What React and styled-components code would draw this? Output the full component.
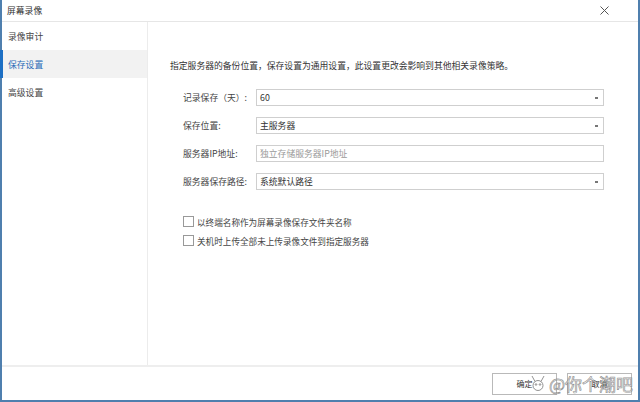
import React from "react";
import styled, { createGlobalStyle } from "styled-components";

const Global = createGlobalStyle`
  html, body { margin: 0; padding: 0; background: #fff; }
  body { font-family: "Noto Sans CJK SC", "Noto Sans", sans-serif; font-size: 8.8px; color: #333; }
  * { box-sizing: border-box; }
`;

const Window = styled.div`
  position: relative;
  width: 640px;
  height: 402px;
  display: flex;
  flex-direction: column;
  background: #fff;
  border-left: 2px solid #4f7fae;
  border-right: 2px solid #4f7fae;
  border-bottom: 2px solid #4f7fae;
`;

const TitleBar = styled.div`
  height: 22px;
  flex: none;
  display: flex;
  align-items: center;
  justify-content: space-between;
  padding: 0 29px 0 5px;
  border-bottom: 1px solid #e6e6e6;
  font-size: 8.8px;
  color: #333;
`;

const Body = styled.div`
  flex: 1;
  display: flex;
  min-height: 0;
`;

const Sidebar = styled.div`
  width: 146px;
  flex: none;
  border-right: 1px solid #ececec;
  display: flex;
  flex-direction: column;
`;

const NavItem = styled.div`
  height: 28px;
  display: flex;
  align-items: center;
  padding-left: 5px;
  font-size: 8.8px;
  color: ${(p) => (p.$active ? "#2a6cb8" : "#444")};
  background: ${(p) => (p.$active ? "#f2f2f2" : "transparent")};
  border-left: 3px solid ${(p) => (p.$active ? "#1d6fc4" : "transparent")};
  margin-left: -2px;
`;

const Content = styled.div`
  flex: 1;
  padding: 37px 0 0 22px;
  display: flex;
  flex-direction: column;
`;

const Desc = styled.div`
  line-height: 14px;
  font-size: 8.8px;
  color: #333;
  margin-bottom: 16px;
  white-space: nowrap;
`;

const Form = styled.div`
  display: flex;
  flex-direction: column;
  gap: 11px;
  padding-left: 13px;
`;

const Row = styled.div`
  display: flex;
  align-items: center;
  height: 17px;
`;

const Label = styled.div`
  width: 73px;
  flex: none;
  font-size: 8.8px;
  color: #444;
  white-space: nowrap;
`;

const Field = styled.div`
  width: 348px;
  height: 17px;
  border: 1px solid #cfcfcf;
  display: flex;
  align-items: center;
  justify-content: space-between;
  padding: 0 5px 0 3px;
  font-size: 8.8px;
  color: ${(p) => (p.$placeholder ? "#9a9a9a" : "#333")};
  background: #fff;
`;

const Arrow = styled.span`
  width: 3px;
  height: 2px;
  background: #777;
  display: block;
`;

const Checks = styled.div`
  display: flex;
  flex-direction: column;
  gap: 8px;
  padding-left: 13px;
  margin-top: 26px;
`;

const CheckRow = styled.label`
  display: flex;
  align-items: center;
  gap: 3px;
  height: 11px;
  font-size: 8.6px;
  color: #444;
  white-space: nowrap;
`;

const Box = styled.span`
  width: 11px;
  height: 11px;
  border: 1px solid #999;
  background: #fff;
  display: block;
`;

const Footer = styled.div`
  height: 35px;
  flex: none;
  border-top: 2px solid #eeeeee;
  display: flex;
  justify-content: flex-end;
  align-items: center;
  gap: 10px;
  padding-right: 6px;
`;

const Button = styled.div`
  width: 65px;
  height: 22px;
  border: 1px solid #b9b9b9;
  background: #fff;
  display: flex;
  align-items: center;
  justify-content: center;
  font-size: 8px;
  color: #333;
`;

const Watermark = styled.div`
  position: absolute;
  right: 5px;
  bottom: 8px;
  display: flex;
  align-items: center;
  gap: 2px;
  font-size: 17px;
  color: rgba(255, 255, 255, 0.45);
  -webkit-text-stroke: 0.7px rgba(120, 120, 120, 0.8);
  pointer-events: none;
  line-height: 1;
`;

const CloseIcon = () => (
  <svg width="9" height="9" viewBox="0 0 9 9">
    <path d="M0.5 0.5 L8.5 8.5 M8.5 0.5 L0.5 8.5" stroke="#555" strokeWidth="1" fill="none" />
  </svg>
);

const Logo = () => (
  <svg width="18" height="18" viewBox="0 0 18 18">
    <g fill="none" stroke="rgba(120,120,120,0.8)" strokeWidth="1">
      <path d="M3 2 L6 7.5 M15 2 L12 7.5" />
      <circle cx="9" cy="11.5" r="5" />
      <circle cx="7" cy="10.5" r="0.8" />
      <circle cx="11" cy="10.5" r="0.8" />
    </g>
  </svg>
);

const nav = ["录像审计", "保存设置", "高级设置"];

const rows = [
  { label: "记录保存（天）:", value: "60", select: true },
  { label: "保存位置:", value: "主服务器", select: true },
  { label: "服务器IP地址:", value: "独立存储服务器IP地址", placeholder: true },
  { label: "服务器保存路径:", value: "系统默认路径", select: true },
];

export default function App() {
  return (
    <>
      <Global />
      <Window>
        <TitleBar>
          <span>屏幕录像</span>
          <CloseIcon />
        </TitleBar>
        <Body>
          <Sidebar>
            {nav.map((n, i) => (
              <NavItem key={n} $active={i === 1}>{n}</NavItem>
            ))}
          </Sidebar>
          <Content>
            <Desc>指定服务器的备份位置，保存设置为通用设置，此设置更改会影响到其他相关录像策略。</Desc>
            <Form>
              {rows.map((r) => (
                <Row key={r.label}>
                  <Label>{r.label}</Label>
                  <Field $placeholder={r.placeholder}>
                    <span>{r.value}</span>
                    {r.select && <Arrow />}
                  </Field>
                </Row>
              ))}
            </Form>
            <Checks>
              <CheckRow><Box />以终端名称作为屏幕录像保存文件夹名称</CheckRow>
              <CheckRow><Box />关机时上传全部未上传录像文件到指定服务器</CheckRow>
            </Checks>
          </Content>
        </Body>
        <Footer>
          <Button>确定</Button>
          <Button>取消</Button>
        </Footer>
        <Watermark>
          <Logo />
          <span>@你个潮吧</span>
        </Watermark>
      </Window>
    </>
  );
}
